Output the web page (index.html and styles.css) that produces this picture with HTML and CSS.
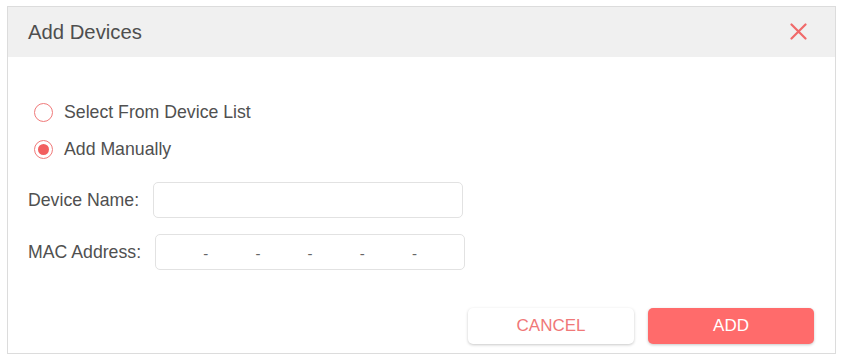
FILE: index.html
```html
<!DOCTYPE html>
<html>
<head>
    <meta charset="utf-8">
	<title>Add Devices</title>
	<link rel="stylesheet" href="styles.css">
</head>
<body>
  <div class='dialog'>
    <div class='dialog_head'>
      <span class='dialog_title'>Add Devices</span>
      <span class='dialog_close' title="Close">
        <svg width="17" height="17" viewBox="0 0 17 17"><path d="M1.5 1.5 L15.5 15.5 M15.5 1.5 L1.5 15.5" stroke="#f06a6a" stroke-width="2.2" stroke-linecap="round"/></svg>
      </span>
    </div>
    <div class='dialog_body'>
      <label class='radio_row'><span class='radio'></span>Select From Device List</label>
      <label class='radio_row'><span class='radio checked'></span>Add Manually</label>
      <div class='form_row first'>
        <span class='form_label'>Device Name:</span>
        <div class='text_box'></div>
      </div>
      <div class='form_row'>
        <span class='form_label'>MAC Address:</span>
        <div class='text_box mac_box'>
          <span class='seg'></span><span class='dash'>-</span>
          <span class='seg'></span><span class='dash'>-</span>
          <span class='seg'></span><span class='dash'>-</span>
          <span class='seg'></span><span class='dash'>-</span>
          <span class='seg'></span><span class='dash'>-</span>
          <span class='seg'></span>
        </div>
      </div>
      <div class='btn_row'>
        <div class='btn btn_cancel'>CANCEL</div>
        <div class='btn btn_add'>ADD</div>
      </div>
    </div>
  </div>
</body>
</html>
```

FILE: styles.css
```css
      body{
        margin: 0;
        background: #fff;
        font-family: "Liberation Sans", Arial, sans-serif;
        color: #505050;
      }
      .dialog{
        margin: 6px 0 0 7px;
        width: 829px;
        height: 348px;
        border: 1px solid #dcdcdc;
        box-sizing: border-box;
      }
      .dialog_head{
        height: 50px;
        background: #f0f0f0;
        display: flex;
        align-items: center;
        justify-content: space-between;
        padding: 0 28px 0 20px;
      }
      .dialog_title{
        font-size: 20.3px;
        color: #4e4e4e;
      }
      .dialog_close{
        display: flex;
        margin-top: -2px;
      }
      .dialog_body{
        padding: 37px 20px 0 20px;
      }
      .radio_row{
        display: flex;
        align-items: center;
        height: 37px;
        padding-left: 6px;
        gap: 11px;
        font-size: 17.7px;
      }
      .radio{
        width: 19px;
        height: 19px;
        border: 1.5px solid #f07a7a;
        border-radius: 50%;
        box-sizing: border-box;
        display: flex;
        align-items: center;
        justify-content: center;
      }
      .radio.checked::after{
        content: '';
        width: 11px;
        height: 11px;
        border-radius: 50%;
        background: #f25f5f;
      }
      .form_row{
        display: flex;
        align-items: center;
        gap: 14px;
        margin-top: 16px;
        font-size: 17.7px;
      }
      .form_row.first{
        margin-top: 14px;
      }
      .text_box{
        width: 310px;
        height: 36px;
        border: 1px solid #e2e2e2;
        border-radius: 5px;
        box-sizing: border-box;
      }
      .mac_box{
        display: flex;
        align-items: center;
        color: #666;
        font-size: 15px;
        padding-top: 3px;
      }
      .seg{
        flex: 1;
      }
      .dash{
        width: 5px;
      }
      .btn_row{
        display: flex;
        justify-content: flex-end;
        gap: 14px;
        margin-top: 38px;
        padding-right: 1px;
      }
      .btn{
        width: 166px;
        height: 36px;
        line-height: 36px;
        text-align: center;
        font-size: 17px;
        border-radius: 5px;
        box-shadow: 0 1px 3px rgba(0,0,0,0.22);
      }
      .btn_cancel{
        background: #fff;
        color: #f07878;
      }
      .btn_add{
        background: #ff6b6b;
        color: #fff;
      }
```
